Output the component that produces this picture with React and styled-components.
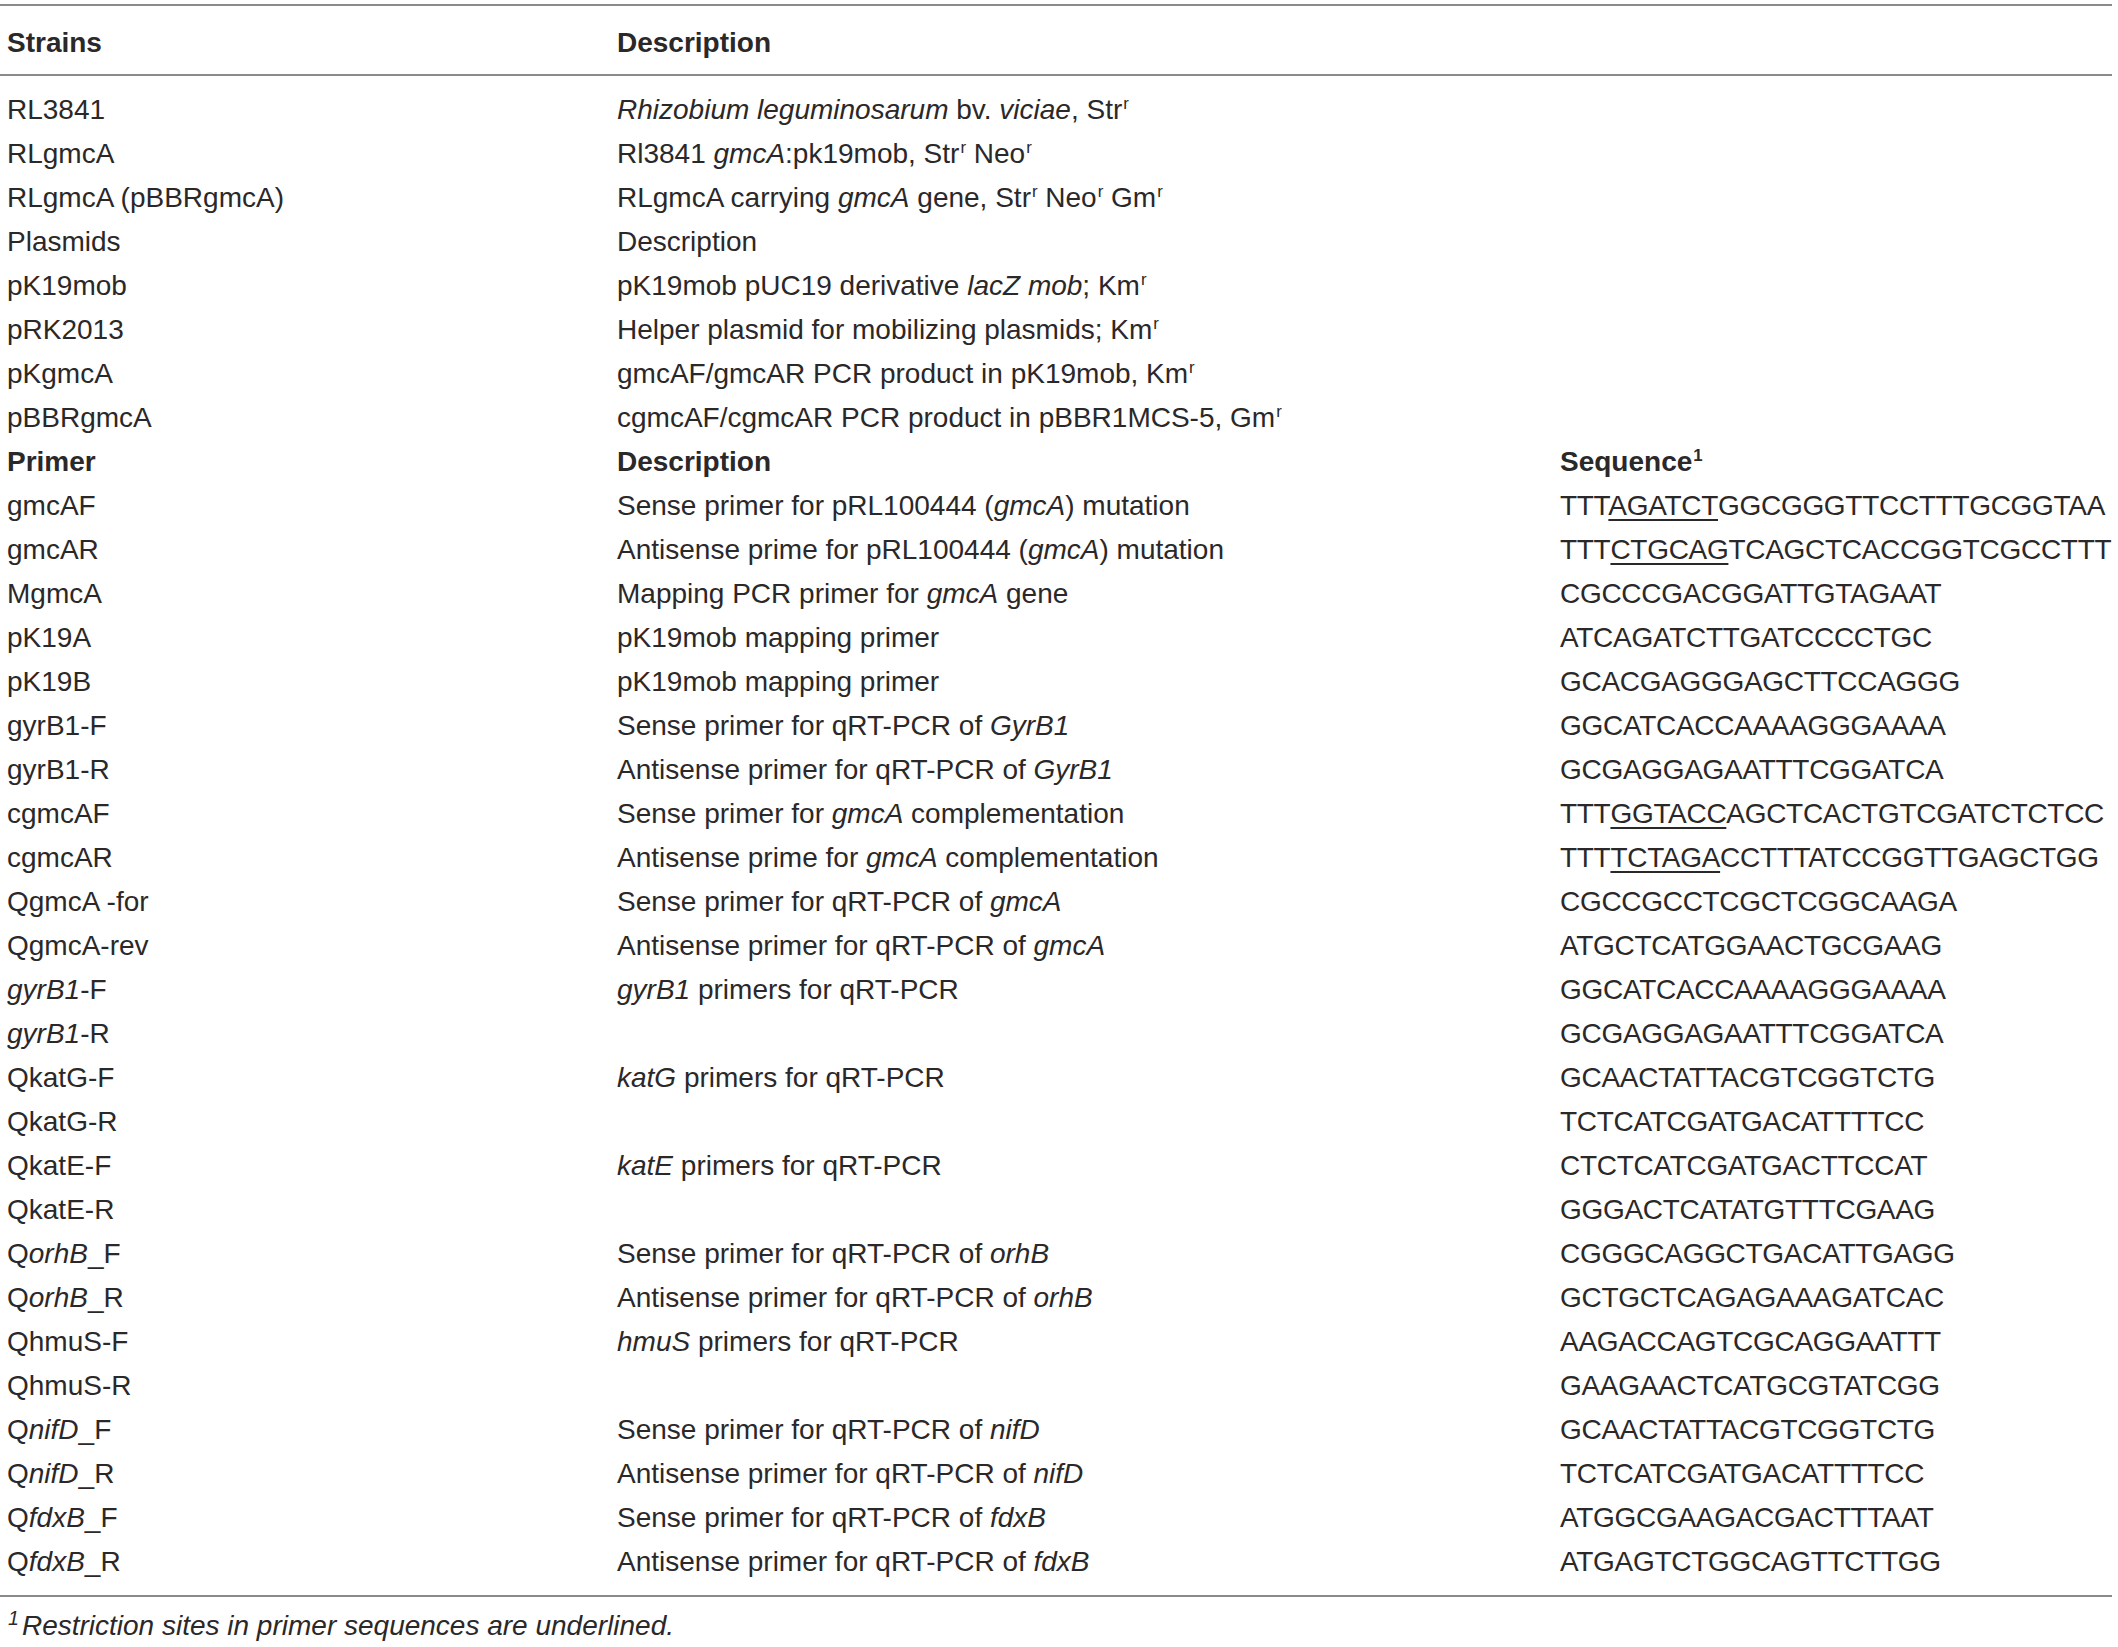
import styled, { createGlobalStyle } from "styled-components"

const Global = createGlobalStyle`
    body {
        margin: 0;
        background: #fff;
        font-family: "Liberation Sans", Arial, sans-serif;
        color: #2b2829;
    }
`

const Page = styled.div`
    width: 2112px;
    padding-top: 4px;
`

const Table = styled.div`
    border-top: 2px solid #8a8a8a;
    border-bottom: 2px solid #8a8a8a;
`

const Head = styled.div`
    border-bottom: 2px solid #8a8a8a;
    height: 70px;
    padding-top: 5px;
    box-sizing: border-box;
    display: flex;
    align-items: center;
`

const Body = styled.div`
    padding: 12px 0 11px;
`

const Row = styled.div`
    display: grid;
    grid-template-columns: 610px 943px 1fr;
    padding-left: 7px;
    height: ${props => props.h || 44}px;
    align-items: center;
    width: 100%;
    font-size: 28px;
    font-weight: ${props => (props.bold ? 700 : 400)};
    white-space: nowrap;
`

const Cell = styled.div``

const Seq = styled.div`
    letter-spacing: -0.3px;
`

const Sup = styled.sup`
    font-size: 0.6em;
    vertical-align: 0.6em;
    line-height: 0;
    margin-left: 1px;
`

const Site = styled.span`
    text-decoration: underline;
    text-underline-offset: 4px;
    text-decoration-thickness: 1.5px;
`

const Foot = styled.div`
    padding: 13px 0 0 8px;
    font-size: 28px;
    font-style: italic;
`

const FootMark = styled.sup`
    font-size: 0.7em;
    vertical-align: 0.5em;
    line-height: 0;
    margin-right: 3px;
`

const r = <Sup>r</Sup>

const strains = [
    ["RL3841", <><i>Rhizobium leguminosarum</i> bv. <i>viciae</i>, Str{r}</>],
    ["RLgmcA", <>Rl3841 <i>gmcA</i>:pk19mob, Str{r} Neo{r}</>],
    ["RLgmcA (pBBRgmcA)", <>RLgmcA carrying <i>gmcA</i> gene, Str{r} Neo{r} Gm{r}</>],
    ["Plasmids", "Description"],
    ["pK19mob", <>pK19mob pUC19 derivative <i>lacZ mob</i>; Km{r}</>],
    ["pRK2013", <>Helper plasmid for mobilizing plasmids; Km{r}</>],
    ["pKgmcA", <>gmcAF/gmcAR PCR product in pK19mob, Km{r}</>],
    ["pBBRgmcA", <>cgmcAF/cgmcAR PCR product in pBBR1MCS-5, Gm{r}</>],
]

const primers = [
    ["gmcAF", <>Sense primer for pRL100444 (<i>gmcA</i>) mutation</>, <>TTT<Site>AGATCT</Site>GGCGGGTTCCTTTGCGGTAA</>],
    ["gmcAR", <>Antisense prime for pRL100444 (<i>gmcA</i>) mutation</>, <>TTT<Site>CTGCAG</Site>TCAGCTCACCGGTCGCCTTT</>],
    ["MgmcA", <>Mapping PCR primer for <i>gmcA</i> gene</>, "CGCCCGACGGATTGTAGAAT"],
    ["pK19A", "pK19mob mapping primer", "ATCAGATCTTGATCCCCTGC"],
    ["pK19B", "pK19mob mapping primer", "GCACGAGGGAGCTTCCAGGG"],
    ["gyrB1-F", <>Sense primer for qRT-PCR of <i>GyrB1</i></>, "GGCATCACCAAAAGGGAAAA"],
    ["gyrB1-R", <>Antisense primer for qRT-PCR of <i>GyrB1</i></>, "GCGAGGAGAATTTCGGATCA"],
    ["cgmcAF", <>Sense primer for <i>gmcA</i> complementation</>, <>TTT<Site>GGTACC</Site>AGCTCACTGTCGATCTCTCC</>],
    ["cgmcAR", <>Antisense prime for <i>gmcA</i> complementation</>, <>TTT<Site>TCTAGA</Site>CCTTTATCCGGTTGAGCTGG</>],
    ["QgmcA -for", <>Sense primer for qRT-PCR of <i>gmcA</i></>, "CGCCGCCTCGCTCGGCAAGA"],
    ["QgmcA-rev", <>Antisense primer for qRT-PCR of <i>gmcA</i></>, "ATGCTCATGGAACTGCGAAG"],
    [<><i>gyrB1</i>-F</>, <><i>gyrB1</i> primers for qRT-PCR</>, "GGCATCACCAAAAGGGAAAA"],
    [<><i>gyrB1</i>-R</>, "", "GCGAGGAGAATTTCGGATCA"],
    ["QkatG-F", <><i>katG</i> primers for qRT-PCR</>, "GCAACTATTACGTCGGTCTG"],
    ["QkatG-R", "", "TCTCATCGATGACATTTTCC"],
    ["QkatE-F", <><i>katE</i> primers for qRT-PCR</>, "CTCTCATCGATGACTTCCAT"],
    ["QkatE-R", "", "GGGACTCATATGTTTCGAAG"],
    [<>Q<i>orhB</i>_F</>, <>Sense primer for qRT-PCR of <i>orhB</i></>, "CGGGCAGGCTGACATTGAGG"],
    [<>Q<i>orhB</i>_R</>, <>Antisense primer for qRT-PCR of <i>orhB</i></>, "GCTGCTCAGAGAAAGATCAC"],
    ["QhmuS-F", <><i>hmuS</i> primers for qRT-PCR</>, "AAGACCAGTCGCAGGAATTT"],
    ["QhmuS-R", "", "GAAGAACTCATGCGTATCGG"],
    [<>Q<i>nifD</i>_F</>, <>Sense primer for qRT-PCR of <i>nifD</i></>, "GCAACTATTACGTCGGTCTG"],
    [<>Q<i>nifD</i>_R</>, <>Antisense primer for qRT-PCR of <i>nifD</i></>, "TCTCATCGATGACATTTTCC"],
    [<>Q<i>fdxB</i>_F</>, <>Sense primer for qRT-PCR of <i>fdxB</i></>, "ATGGCGAAGACGACTTTAAT"],
    [<>Q<i>fdxB</i>_R</>, <>Antisense primer for qRT-PCR of <i>fdxB</i></>, "ATGAGTCTGGCAGTTCTTGG"],
]

export default function App() {
    return (
        <Page>
            <Global />
            <Table>
                <Head>
                    <Row bold h={64}>
                        <Cell>Strains</Cell>
                        <Cell>Description</Cell>
                        <Cell />
                    </Row>
                </Head>
                <Body>
                    {strains.map((s, i) => (
                        <Row key={"s" + i}>
                            <Cell>{s[0]}</Cell>
                            <Cell>{s[1]}</Cell>
                            <Cell />
                        </Row>
                    ))}
                    <Row bold>
                        <Cell>Primer</Cell>
                        <Cell>Description</Cell>
                        <Cell>Sequence<Sup>1</Sup></Cell>
                    </Row>
                    {primers.map((p, i) => (
                        <Row key={"p" + i}>
                            <Cell>{p[0]}</Cell>
                            <Cell>{p[1]}</Cell>
                            <Seq>{p[2]}</Seq>
                        </Row>
                    ))}
                </Body>
            </Table>
            <Foot><FootMark>1</FootMark>Restriction sites in primer sequences are underlined.</Foot>
        </Page>
    )
}
